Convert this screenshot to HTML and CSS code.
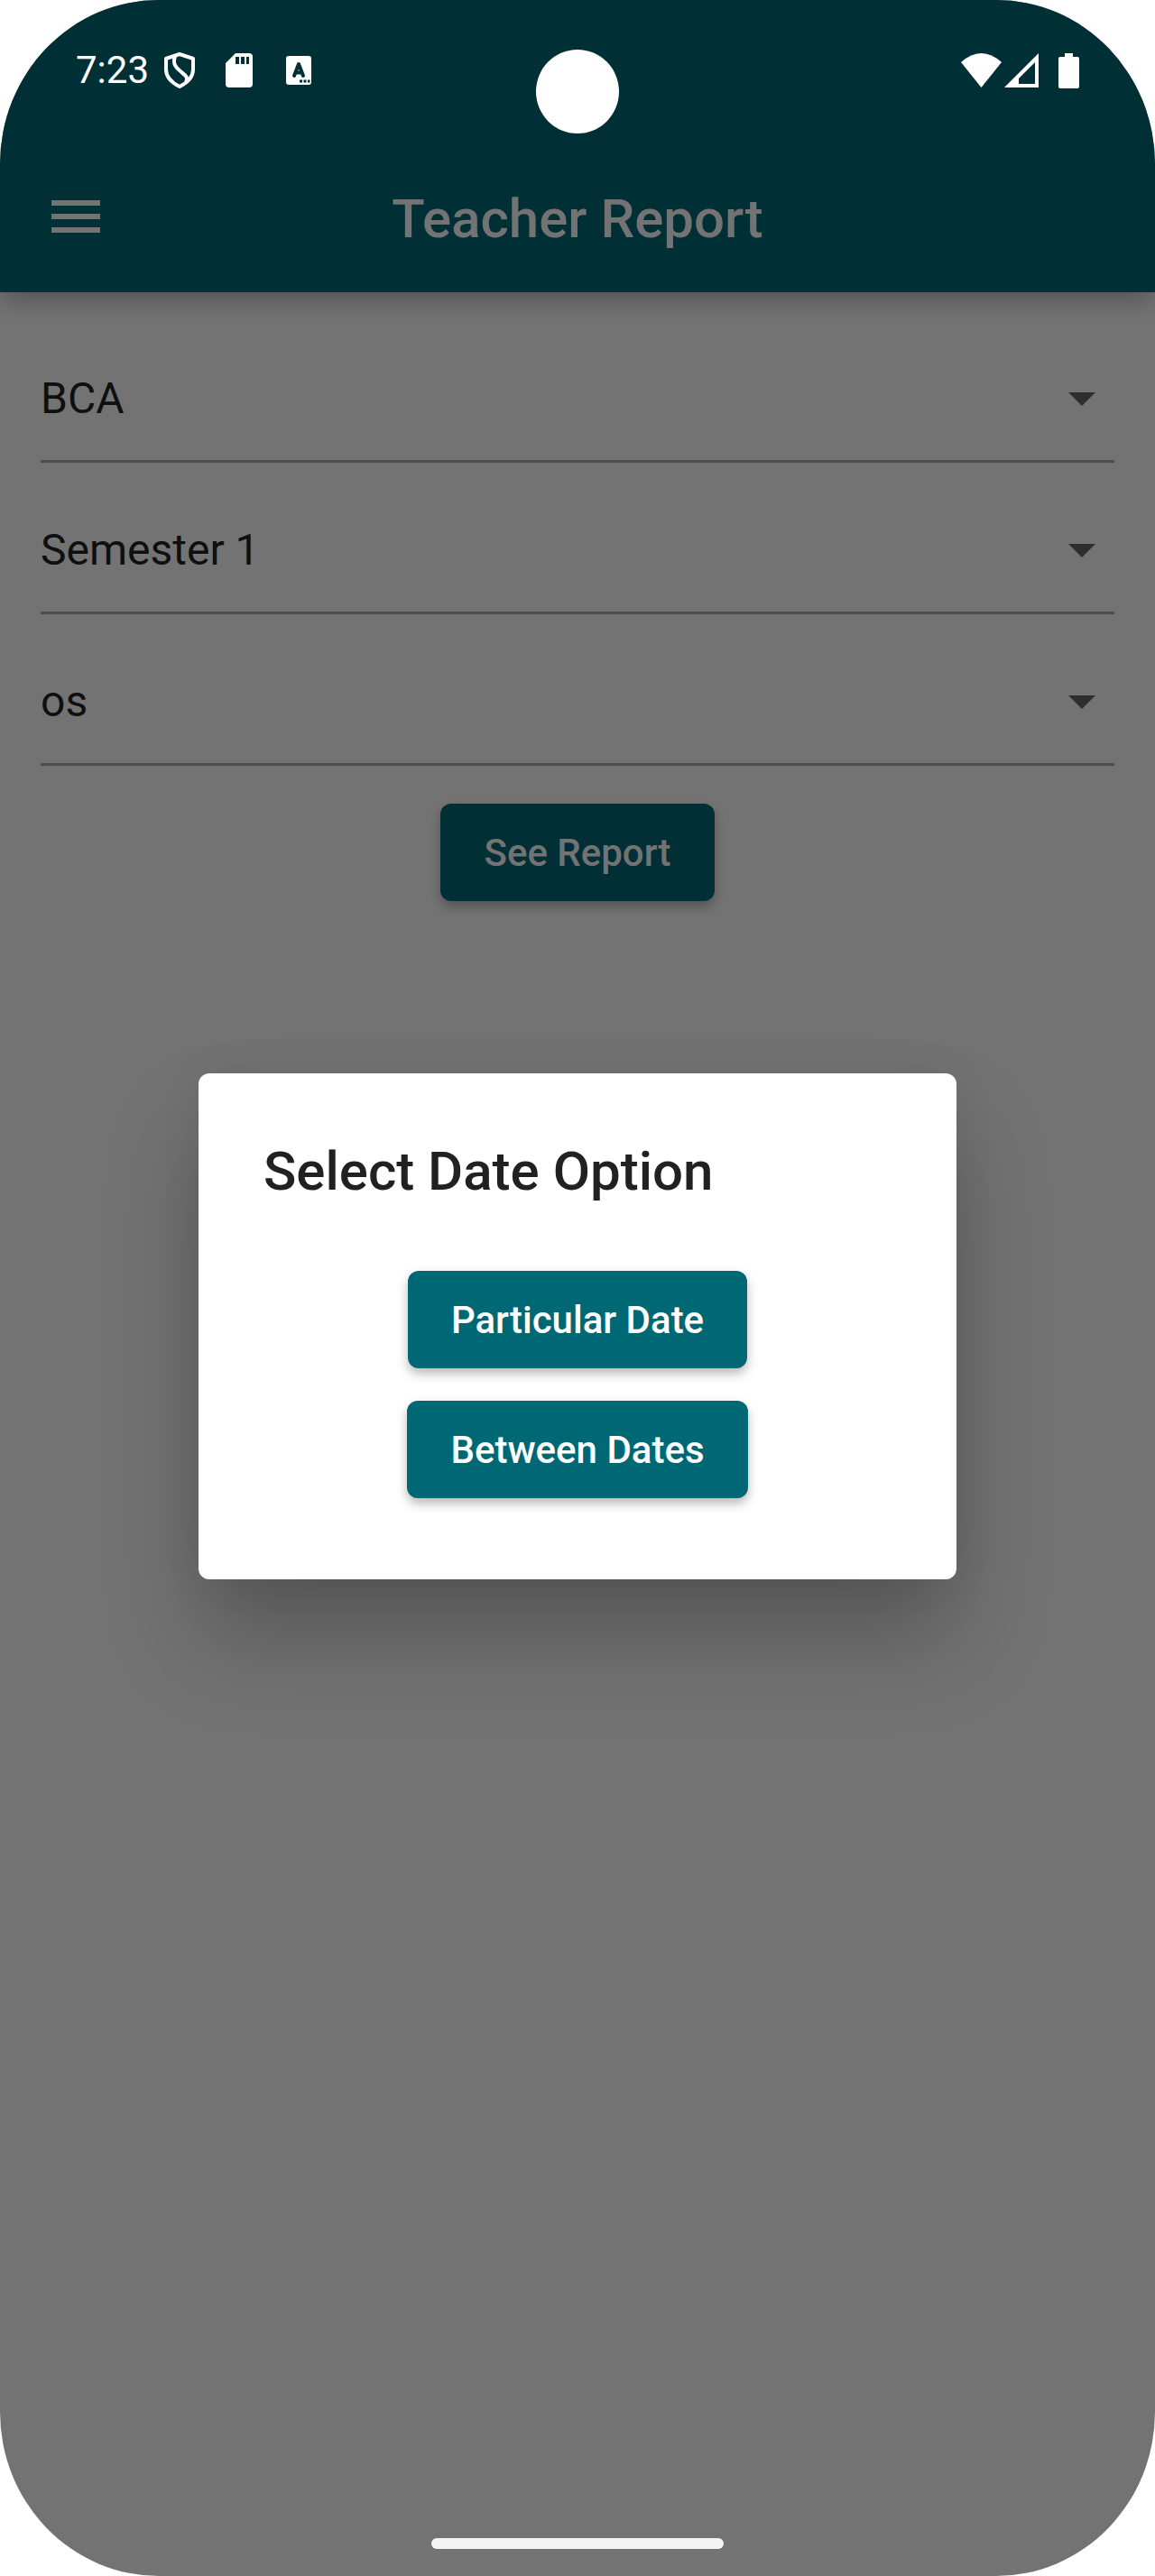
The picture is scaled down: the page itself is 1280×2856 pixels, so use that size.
FILE: index.html
```html
<!DOCTYPE html>
<html lang="en">
<head>
<meta charset="utf-8">
<title>Teacher Report</title>
<link rel="stylesheet" href="styles.css">
</head>
<body>
<div class="phone">
  <header class="header">
    <div class="status-bar">
      <div class="status-left">
        <span class="clock">7:23</span>
        <svg class="icon-shield" width="34" height="40" viewBox="0 0 34 40"><path d="M17 2 32 7V19C32 28 25 34 17 38 9 34 2 28 2 19V7Z" fill="none" stroke="#fff" stroke-width="4" stroke-linejoin="round"/><path d="M12 4C9 13 13 17 18 21 24 26 27 28 24 33" fill="none" stroke="#fff" stroke-width="4"/></svg>
        <svg class="icon-sd" width="30" height="38" viewBox="0 0 30 38"><path fill="#fff" fill-rule="evenodd" d="M11 0H26Q30 0 30 4V34Q30 38 26 38H4Q0 38 0 34V11ZM11 4V12H15V4ZM17 4V12H21V4ZM23 4V12H26V4Z"/></svg>
        <svg class="icon-a" width="28" height="32" viewBox="0 0 28 32"><rect width="28" height="32" rx="3" fill="#fff"/><path d="M9 22 14 9 19 22M11 18.500H17" fill="none" stroke="#002f35" stroke-width="4" stroke-linecap="round" stroke-linejoin="round"/><path d="M15 26.500h3v3h-3zM19.500 26.500h3v3h-3zM24 26.500h2.500v3H24z" fill="#002f35"/></svg>
      </div>
      <div class="camera"></div>
      <div class="status-right">
        <svg width="45" height="38" viewBox="0 0 45 38"><path fill="#fff" d="M0 10Q22.500-10 45 10L22.500 38Z"/></svg>
        <svg width="38" height="38" viewBox="0 0 38 38"><path fill="#fff" fill-rule="evenodd" d="M38 0V38H0ZM34 10 16 28V34H34Z"/></svg>
        <svg class="icon-battery" width="23" height="39" viewBox="0 0 23 39"><path fill="#fff" d="M7 0H16V4H21Q23 4 23 6V37Q23 39 21 39H2Q0 39 0 37V6Q0 4 2 4H7Z"/></svg>
      </div>
    </div>
    <div class="app-bar">
      <svg class="menu" width="54" height="36" viewBox="0 0 54 36"><path fill="#737373" d="M0 0H54V6H0ZM0 15H54V21H0ZM0 30H54V36H0Z"/></svg>
      <h1 class="app-title">Teacher Report</h1>
    </div>
  </header>
  <main class="form">
    <div class="select"><span>BCA</span><svg width="30" height="15" viewBox="0 0 30 15"><path class="caret" d="M0 0H30L15 15Z"/></svg></div>
    <div class="select"><span>Semester 1</span><svg width="30" height="15" viewBox="0 0 30 15"><path class="caret" d="M0 0H30L15 15Z"/></svg></div>
    <div class="select"><span>os</span><svg width="30" height="15" viewBox="0 0 30 15"><path class="caret" d="M0 0H30L15 15Z"/></svg></div>
    <button class="button button-report">See Report</button>
  </main>
  <section class="dialog" role="dialog">
    <h2 class="dialog-title">Select Date Option</h2>
    <button class="button button-particular">Particular Date</button>
    <button class="button button-between">Between Dates</button>
  </section>
  <div class="home-bar"></div>
</div>
</body>
</html>
```
FILE: styles.css
```css
* { box-sizing: border-box; }
body { margin: 0; background: #fff; font-family: Roboto, "Liberation Sans", sans-serif; }
svg { display: block; flex: none; }
h1, h2 { margin: 0; font-weight: 500; }

.phone {
  position: relative;
  width: 1280px;
  height: 2856px;
  overflow: hidden;
  background: #737373;
  border-radius: 176px / 182px;
  display: flex;
  flex-direction: column;
}
.header {
  height: 324px;
  background: #002f35;
  box-shadow: 0 12px 24px -3px rgba(0, 0, 0, .27);
}
.status-bar {
  height: 156px;
  padding: 0 84px 0 83px;
  display: grid;
  grid-template-columns: 1fr 92px 1fr;
}
.status-left, .status-right { display: flex; align-items: center; }
.status-right { justify-content: flex-end; gap: 3px; }
.clock { width: 99px; padding-left: 1px; color: #fff; font-size: 42px; line-height: 50px; }
.icon-sd { margin-left: 34px; }
.icon-a { margin-left: 37px; }
.icon-battery { margin-left: 19px; }
.camera { width: 92px; height: 93px; margin-top: 55px; border-radius: 50%; background: #fff; }
.app-bar {
  height: 168px;
  padding: 0 57px;
  display: grid;
  grid-template-columns: 54px 1fr 54px;
  align-items: center;
}
.app-title { padding-top: 5px; color: #737373; font-size: 60px; line-height: 70px; text-align: center; }

.form { padding: 21px 45px 0; display: flex; flex-direction: column; }
.select {
  height: 168px;
  padding: 28px 21px 0 0;
  border-bottom: 3px solid #4c4e4d;
  display: flex;
  justify-content: space-between;
  align-items: center;
  color: #0f0f0f;
  font-size: 48px;
}
.select svg { margin-top: 1px; }
.caret { fill: #2e2e2e; }

.button {
  height: 108px;
  padding: 2px 0 0;
  border: 0;
  border-radius: 12px;
  background: #006874;
  color: #fff;
  font: 500 42px/50px Roboto, "Liberation Sans", sans-serif;
  align-self: center;
  box-shadow: 0 6px 12px rgba(0, 0, 0, .28);
}
.button-report { width: 304px; margin-top: 42px; background: #002f35; color: #737373; }
.button-particular { width: 376px; }
.button-between { width: 378px; margin-top: 36px; }

.dialog {
  position: absolute;
  left: 220px;
  top: 1190px;
  width: 840px;
  height: 561px;
  padding: 73px 72px 72px;
  border-radius: 12px;
  background: #fff;
  display: flex;
  flex-direction: column;
  box-shadow: 0 66px 105px -4px rgba(0, 0, 0, .25), 0 0 50px rgba(0, 0, 0, .06);
}
.dialog-title { height: 146px; color: #212121; font-size: 60px; line-height: 72px; }

.home-bar {
  position: absolute;
  left: 478px;
  top: 2814px;
  width: 324px;
  height: 12px;
  border-radius: 6px;
  background: #f3f3f3;
}
```
